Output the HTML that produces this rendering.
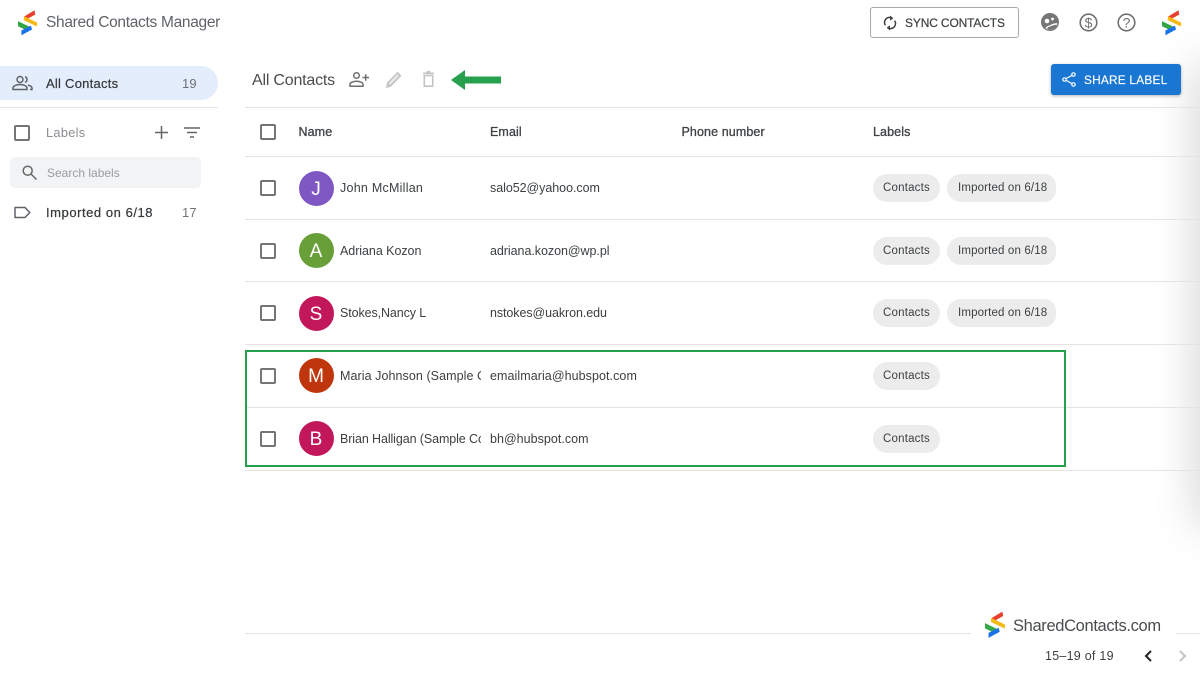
<!DOCTYPE html>
<html><head><meta charset="utf-8"><style>
html,body{margin:0;padding:0;background:#fff}
body{width:1200px;height:675px;position:relative;overflow:hidden;font-family:"Liberation Sans",sans-serif;color:#3c4043}
.a{position:absolute;white-space:nowrap}
.ln{position:absolute;height:1px;background:#e4e4e4}
.cb{position:absolute;width:12px;height:12px;border:2px solid #757575;border-radius:2px;left:260px}
.av{position:absolute;left:298.5px;width:35px;height:35px;border-radius:50%;color:#fff;font-size:19px;line-height:37px;text-align:center}
.chip{position:absolute;height:28px;line-height:29.5px;background:#ececec;border-radius:14px;font-size:11.5px;letter-spacing:.2px;color:#3c4043;box-sizing:border-box;padding-left:10px;overflow:hidden;white-space:nowrap}
.c1{left:873px;width:67px}
.c2{left:947px;width:109px;padding-left:11px;letter-spacing:.15px;border-radius:14px 12px 12px 14px}
.nm{position:absolute;left:340px;width:141px;overflow:hidden;white-space:nowrap;font-size:12.5px;line-height:16px}
.em{position:absolute;left:490px;white-space:nowrap;font-size:12.5px;line-height:16px}
.h{position:absolute;top:124px;font-size:12.5px;line-height:16px;color:#3f4245;-webkit-text-stroke:.3px #3f4245;letter-spacing:.1px}
svg{position:absolute;overflow:visible}
</style></head><body>

<!-- header logo -->
<svg style="left:18px;top:10px" width="20" height="26" viewBox="0 0 20 26" stroke-width=".6">
<path d="M6.300 6.700L16.300.7 17 4.300 8 9.300Z" fill="#e8402f" stroke="#e8402f"/>
<path d="M6.300 6.700L18.700 12.700V16L6 10Z" fill="#f5b916" stroke="#f5b916"/>
<path d="M.3 11.700L12 17.300 8.700 20 .3 16Z" fill="#34a647" stroke="#34a647"/>
<path d="M3.700 20.700L12.700 16 13.700 19.300 3.700 24.700Z" fill="#1a73e8" stroke="#1a73e8"/>
</svg>
<div class="a" style="left:46px;top:13px;font-size:15.5px;line-height:20px;color:#5f6368;letter-spacing:-.3px">Shared Contacts Manager</div>

<div class="a" style="left:870px;top:7px;width:147px;height:29px;border:1px solid #a8a8a8;border-radius:3px"></div>
<svg style="left:883px;top:15px" width="14" height="16" viewBox="0 0 15 16" fill="none" stroke="#3c4043" stroke-width="1.600">
<path d="M2.500 10.500A5.500 5.500 0 0 1 10 2.800"/><path d="M12.500 5.500A5.500 5.500 0 0 1 5 13.200"/>
<path d="M7.500 0L11 3 7.500 5.500Z" fill="#3c4043" stroke="none"/><path d="M7.500 16L4 13 7.500 10.500Z" fill="#3c4043" stroke="none"/>
</svg>
<div class="a" style="left:905px;top:15px;font-size:12px;line-height:16px;letter-spacing:-.15px;color:#3c4043;-webkit-text-stroke:.2px #3c4043">SYNC CONTACTS</div>

<svg style="left:1041px;top:13px" width="18" height="18" viewBox="0 0 18 18">
<circle cx="9" cy="9" r="9" fill="#777"/><circle cx="6" cy="8" r="2.300" fill="#fff"/><circle cx="11.500" cy="6" r="1.400" fill="#fff"/>
<path d="M4.500 15c2-2.500 4.500-2.500 6-3.500 1.500-1 4-1.500 6-1-.5 3-3.500 6-7 6.500-2 .2-3.500-.5-5-2Z" fill="#fff"/><path d="M6 15.800c1-2 3-2.300 5-3 1.500-.6 3-1.200 5-1 -.8 2.700-3.200 5-6.500 5.200-1.500.1-2.500-.4-3.500-1.200Z" fill="#777"/>
</svg>
<svg style="left:1079px;top:13px" width="19" height="19" viewBox="0 0 19 19">
<circle cx="9.500" cy="9.500" r="8.300" fill="none" stroke="#707070" stroke-width="1.600"/>
<text x="9.500" y="14.500" font-size="14" text-anchor="middle" fill="#707070" font-family="Liberation Sans">$</text>
</svg>
<svg style="left:1117px;top:13px" width="19" height="19" viewBox="0 0 19 19">
<circle cx="9.500" cy="9.500" r="8.300" fill="none" stroke="#707070" stroke-width="1.600"/>
<text x="9.500" y="14.500" font-size="14" text-anchor="middle" fill="#707070" font-family="Liberation Sans">?</text>
</svg>
<svg style="left:1162px;top:10px" width="20" height="26" viewBox="0 0 20 26" stroke-width=".6">
<path d="M6.300 6.700L16.300.7 17 4.300 8 9.300Z" fill="#e8402f" stroke="#e8402f"/>
<path d="M6.300 6.700L18.700 12.700V16L6 10Z" fill="#f5b916" stroke="#f5b916"/>
<path d="M.3 11.700L12 17.300 8.700 20 .3 16Z" fill="#34a647" stroke="#34a647"/>
<path d="M3.700 20.700L12.700 16 13.700 19.300 3.700 24.700Z" fill="#1a73e8" stroke="#1a73e8"/>
</svg>

<!-- sidebar -->
<div class="a" style="left:0;top:66px;width:218px;height:34px;background:#e3edfb;border-radius:0 17px 17px 0"></div>
<svg style="left:12px;top:75px" width="21" height="16" viewBox="0 0 21 16" fill="none" stroke="#5f6368" stroke-width="1.500">
<circle cx="8" cy="4.500" r="3"/><path d="M1 14.500V13c0-2 3.500-3.500 7-3.500s7 1.500 7 3.500v1.500Z"/>
<path d="M13 1.700a3 3 0 0 1 0 5.700M16 10c2 .6 4 1.500 4 3v1.500h-2"/>
</svg>
<div class="a" style="left:46px;top:75.500px;font-size:13px;line-height:16px;letter-spacing:.25px;color:#35383b;-webkit-text-stroke:.2px #35383b">All Contacts</div>
<div class="a" style="left:182px;top:75.500px;font-size:13px;line-height:16px;letter-spacing:.2px;color:#6f7276">19</div>
<div class="ln" style="left:0;top:107px;width:218px"></div>

<div class="a" style="left:14px;top:125px;width:12px;height:12px;border:2px solid #757575;border-radius:2px"></div>
<div class="a" style="left:46px;top:125px;font-size:12.800px;line-height:16px;letter-spacing:.3px;color:#8a8d90">Labels</div>
<svg style="left:155px;top:126px" width="13" height="13" viewBox="0 0 13 13" stroke="#666" stroke-width="1.500"><path d="M6.500 0V13M0 6.500H13"/></svg>
<svg style="left:184px;top:127px" width="16" height="11" viewBox="0 0 16 11" stroke="#666" stroke-width="1.500"><path d="M0 1H16M3 5.500H13M6 10H10"/></svg>
<div class="a" style="left:10px;top:157px;width:191px;height:31px;background:#f1f3f4;border-radius:5px"></div>
<svg style="left:22px;top:165px" width="15" height="15" viewBox="0 0 15 15" fill="none" stroke="#666" stroke-width="1.500"><circle cx="5.700" cy="5.700" r="4.500"/><path d="M9 9L14.500 14.500"/></svg>
<div class="a" style="left:47px;top:165px;font-size:12px;line-height:16px;color:#9a9da0">Search labels</div>
<svg style="left:14px;top:206px" width="17" height="13" viewBox="0 0 17 13" fill="none" stroke="#5f6368" stroke-width="1.500"><path d="M1 1.500H11L15.800 6.500 11 11.500H1Z" stroke-linejoin="round"/></svg>
<div class="a" style="left:46px;top:205px;font-size:13px;line-height:16px;letter-spacing:.55px;color:#35383b;-webkit-text-stroke:.2px #35383b">Imported on 6/18</div>
<div class="a" style="left:182px;top:205px;font-size:13px;line-height:16px;letter-spacing:.2px;color:#6f7276">17</div>

<!-- toolbar -->
<div class="a" style="left:252px;top:70.500px;font-size:16px;line-height:20px;letter-spacing:-.2px;color:#4a4d50">All Contacts</div>
<svg style="left:349px;top:72px" width="20" height="15" viewBox="0 0 20 15" fill="none" stroke="#6f6f6f" stroke-width="1.500">
<circle cx="7.500" cy="3.500" r="2.800"/><path d="M1 14.200V12.500c0-2 3-3.200 6.500-3.200s6.500 1.200 6.500 3.200v1.700Z"/><path d="M13.500 5.500H20M16.700 2.200V8.800"/>
</svg>
<svg style="left:386px;top:71px" width="16" height="17" viewBox="0 0 16 17" fill="#c4c4c4"><path d="M0 17L1 11.800 11.500.8 15.500 4.800 4.800 15.800Z"/><path d="M2.800 12.300L11.500 3.300 12.800 4.700 4.200 13.700Z" fill="#eee"/></svg>
<svg style="left:423px;top:71px" width="11" height="16" viewBox="0 0 11 16" fill="none" stroke="#c4c4c4" stroke-width="1.600"><path d="M1.300 4.500H9.700V15.200H1.300Z"/><path d="M0 2.300H11M3.500 .8H7.500"/></svg>
<svg style="left:451px;top:70px" width="50" height="20" viewBox="0 0 50 20"><path d="M0 10L14 0V6.500H50V13.500H14V20Z" fill="#27a04e"/></svg>

<!-- right edge shadow -->
<div class="a" style="left:1204px;top:70px;width:20px;height:450px;box-shadow:0 0 44px 6px rgba(0,0,0,.2)"></div>

<div class="a" style="left:1051px;top:64px;width:130px;height:31px;background:#1976d2;border-radius:3px;box-shadow:0 1px 3px rgba(0,0,0,.3)"></div>
<svg style="left:1062px;top:72px" width="14" height="15" viewBox="0 0 14 15" fill="none" stroke="#fff" stroke-width="1.200"><circle cx="11.500" cy="2.500" r="1.700"/><circle cx="2.500" cy="7.500" r="1.700"/><circle cx="11.500" cy="12.500" r="1.700"/><path d="M4 6.600L10 3.400M4 8.400L10 11.600"/></svg>
<div class="a" style="left:1084px;top:72px;font-size:11.800px;line-height:16px;letter-spacing:.25px;color:#fff;-webkit-text-stroke:.15px #fff">SHARE LABEL</div>

<div class="ln" style="left:245px;top:107px;width:955px"></div>

<!-- table -->
<div class="cb" style="top:124px"></div>
<div class="h" style="left:298.500px">Name</div>
<div class="h" style="left:490px">Email</div>
<div class="h" style="left:681.500px">Phone number</div>
<div class="h" style="left:873px">Labels</div>
<div class="ln" style="left:245px;top:156px;width:955px"></div>

<div class="cb" style="top:180px"></div>
<div class="av" style="top:170.500px;background:#7e57c2">J</div>
<div class="nm" style="top:180px;letter-spacing:.25px">John McMillan</div>
<div class="em" style="top:180px;letter-spacing:-.05px">salo52@yahoo.com</div>
<div class="chip c1" style="top:174px">Contacts</div><div class="chip c2" style="top:174px">Imported on 6/18</div>
<div class="ln" style="left:245px;top:219px;width:955px"></div>

<div class="cb" style="top:243px"></div>
<div class="av" style="top:233px;background:#689f38">A</div>
<div class="nm" style="top:243px;letter-spacing:-.05px">Adriana Kozon</div>
<div class="em" style="top:243px;letter-spacing:-.05px">adriana.kozon@wp.pl</div>
<div class="chip c1" style="top:237px">Contacts</div><div class="chip c2" style="top:237px">Imported on 6/18</div>
<div class="ln" style="left:245px;top:281px;width:955px"></div>

<div class="cb" style="top:305px"></div>
<div class="av" style="top:296px;background:#c2185b">S</div>
<div class="nm" style="top:305px;letter-spacing:-.1px">Stokes,Nancy L</div>
<div class="em" style="top:305px;letter-spacing:-.08px">nstokes@uakron.edu</div>
<div class="chip c1" style="top:299px">Contacts</div><div class="chip c2" style="top:299px">Imported on 6/18</div>
<div class="ln" style="left:245px;top:344px;width:955px"></div>

<div class="cb" style="top:368px"></div>
<div class="av" style="top:358px;background:#bf360c">M</div>
<div class="nm" style="top:368px;letter-spacing:.07px">Maria Johnson (Sample Contact)</div>
<div class="em" style="top:368px;letter-spacing:.07px">emailmaria@hubspot.com</div>
<div class="chip c1" style="top:362px">Contacts</div>
<div class="ln" style="left:245px;top:407px;width:955px"></div>

<div class="cb" style="top:431px"></div>
<div class="av" style="top:421px;background:#c2185b">B</div>
<div class="nm" style="top:431px;letter-spacing:-.1px">Brian Halligan (Sample Contact)</div>
<div class="em" style="top:431px;letter-spacing:.03px">bh@hubspot.com</div>
<div class="chip c1" style="top:425px">Contacts</div>
<div class="ln" style="left:245px;top:470px;width:955px"></div>

<div class="a" style="left:245px;top:350px;width:817px;height:113px;border:2px solid #27a04e"></div>

<!-- footer -->
<div class="ln" style="left:245px;top:633px;width:955px"></div>
<div class="a" style="left:971px;top:610px;width:205px;height:36px;background:#fff"></div>
<svg style="left:985px;top:611px" width="21" height="28" viewBox="0 0 20 26" stroke-width=".6">
<path d="M6.300 6.700L16.300.7 17 4.300 8 9.300Z" fill="#e8402f" stroke="#e8402f"/>
<path d="M6.300 6.700L18.700 12.700V16L6 10Z" fill="#f5b916" stroke="#f5b916"/>
<path d="M.3 11.700L12 17.300 8.700 20 .3 16Z" fill="#34a647" stroke="#34a647"/>
<path d="M3.700 20.700L12.700 16 13.700 19.300 3.700 24.700Z" fill="#1a73e8" stroke="#1a73e8"/>
</svg>
<div class="a" style="left:1013px;top:615.500px;font-size:16.500px;line-height:20px;letter-spacing:-.35px;color:#4a4d50">SharedContacts.com</div>
<div class="a" style="left:1045px;top:648px;font-size:12.500px;line-height:16px;letter-spacing:.25px;color:#3c4043">15–19 of 19</div>
<svg style="left:1144px;top:650px" width="8" height="12" viewBox="0 0 8 12" fill="none" stroke="#222" stroke-width="2"><path d="M7 1L2 6 7 11"/></svg>
<svg style="left:1179px;top:650px" width="8" height="12" viewBox="0 0 8 12" fill="none" stroke="#c4c4c4" stroke-width="2"><path d="M1 1L6 6 1 11"/></svg>
</body></html>
